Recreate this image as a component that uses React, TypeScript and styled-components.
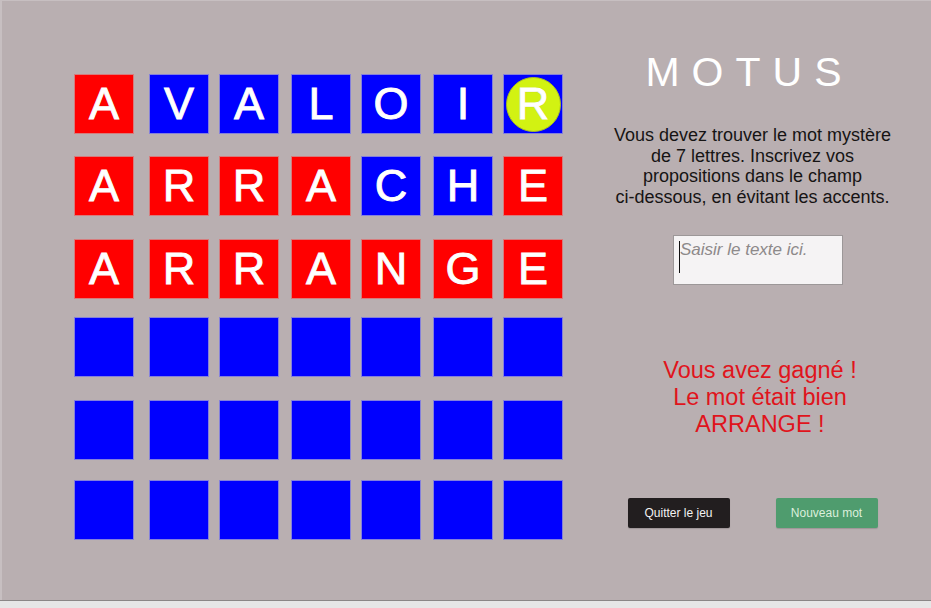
import React from "react";
import styled, { createGlobalStyle } from "styled-components";

const Global = createGlobalStyle`
  html, body { margin: 0; padding: 0; }
  body {
    width: 931px;
    height: 608px;
    overflow: hidden;
    background: #e6e6e6;
    font-family: "Liberation Sans", Arial, sans-serif;
  }
`;

const Screen = styled.div`
  width: 931px;
  height: 608px;
  display: flex;
  flex-direction: column;
`;

const Stage = styled.main`
  height: 600px;
  background: #b9afb1;
  display: flex;
  flex-direction: row;
  box-shadow: inset 2px 1px 0 0 #c7bfc1;
  border-bottom: 1px solid #8a8686;
`;

const Footer = styled.div`
  flex: 1;
  background: #e6e6e6;
`;

const Board = styled.div`
  padding: 75px 0 0 75px;
  display: grid;
  grid-template-columns: 75px 70px 72px 70px 72px 70px 59px;
  grid-template-rows: 82px 83px 78px 83px 80px 58px;
  align-content: start;
  width: 525px;
  flex-shrink: 0;
`;

type TileColor = "red" | "blue";

const Tile = styled.div<{ $color: TileColor }>`
  width: 58px;
  height: 58px;
  background: ${(p) => (p.$color === "red" ? "#ff0000" : "#0000ff")};
  box-shadow: 0 0 0 1px ${(p) => (p.$color === "red" ? "rgba(240,80,80,0.55)" : "rgba(90,90,255,0.55)")};
  display: flex;
  align-items: center;
  justify-content: center;
  color: #ffffff;
  font-family: "Liberation Sans", Arial, sans-serif;
  font-size: 45px;
  line-height: 46px;
  -webkit-text-stroke: 0.9px #ffffff;
  text-shadow: 0 0 1px rgba(60, 60, 60, 0.6);
`;

const Marker = styled.div`
  width: 55px;
  height: 55px;
  border-radius: 50%;
  background: #d2f212;
  border: 1px solid #a9bd22;
  box-sizing: border-box;
  display: flex;
  align-items: center;
  justify-content: center;
  text-shadow: 0 0 1px rgba(90, 90, 60, 0.9);
`;

const Panel = styled.section`
  width: 305px;
  display: flex;
  flex-direction: column;
  align-items: center;
`;

const Title = styled.h1`
  margin: 48px 6px 0 0;
  font-family: "Liberation Sans", Arial, sans-serif;
  font-weight: normal;
  font-size: 41px;
  line-height: 48px;
  letter-spacing: 12px;
  color: #ffffff;
`;

const Instructions = styled.p`
  margin: 29px 0 0 0;
  font-size: 18px;
  line-height: 20.5px;
  color: #161414;
  text-align: center;
  white-space: nowrap;
`;

const InputBox = styled.div`
  position: relative;
  margin: 28px 0 0 11px;
  width: 170px;
  height: 50px;
  box-sizing: border-box;
  background: #f5f3f4;
  border: 1px solid #9c9798;
  padding: 4px 0 0 6px;
`;

const Placeholder = styled.span`
  font-style: italic;
  font-size: 17px;
  line-height: 20px;
  color: #8d898a;
`;

const Caret = styled.span`
  position: absolute;
  left: 5px;
  top: 5px;
  width: 1px;
  height: 32px;
  background: #111;
`;

const Message = styled.p`
  margin: 72px 0 0 15px;
  font-size: 23.5px;
  line-height: 27px;
  color: #e0141c;
  text-align: center;
  white-space: nowrap;
`;

const Buttons = styled.div`
  margin-top: 60px;
  display: flex;
  gap: 46px;
`;

const Button = styled.button<{ $variant: "dark" | "green" }>`
  width: 102px;
  height: 30px;
  border: none;
  border-radius: 2px;
  padding: 0;
  font-family: "Liberation Sans", Arial, sans-serif;
  font-size: 12px;
  background: ${(p) => (p.$variant === "dark" ? "#221e1f" : "#4f9c6e")};
  color: ${(p) => (p.$variant === "dark" ? "#f2f2f2" : "#dcefdc")};
  box-shadow: 0 1px 1px rgba(0, 0, 0, 0.15);
`;

type Cell = { l?: string; c: TileColor; marked?: boolean };

const word = (s: string, colors: string): Cell[] =>
  s.split("").map((l, i) => ({ l, c: colors[i] === "r" ? "red" : "blue" }));

const empty = (): Cell[] => Array.from({ length: 7 }, () => ({ c: "blue" as TileColor }));

const rows: Cell[][] = [
  (() => {
    const r = word("AVALOIR", "rbbbbbb");
    r[6].marked = true;
    return r;
  })(),
  word("ARRACHE", "rrrrbbr"),
  word("ARRANGE", "rrrrrrr"),
  empty(),
  empty(),
  empty(),
];

export default function App() {
  return (
    <Screen>
      <Global />
      <Stage>
        <Board>
          {rows.flatMap((row, ri) =>
            row.map((cell, ci) => (
              <Tile key={`${ri}-${ci}`} $color={cell.c}>
                {cell.marked ? <Marker>{cell.l}</Marker> : cell.l}
              </Tile>
            ))
          )}
        </Board>
        <Panel>
          <Title>MOTUS</Title>
          <Instructions>
            Vous devez trouver le mot mystère
            <br />
            de 7 lettres. Inscrivez vos
            <br />
            propositions dans le champ
            <br />
            ci-dessous, en évitant les accents.
          </Instructions>
          <InputBox>
            <Caret />
            <Placeholder>Saisir le texte ici.</Placeholder>
          </InputBox>
          <Message>
            Vous avez gagné !
            <br />
            Le mot était bien
            <br />
            ARRANGE !
          </Message>
          <Buttons>
            <Button $variant="dark">Quitter le jeu</Button>
            <Button $variant="green">Nouveau mot</Button>
          </Buttons>
        </Panel>
      </Stage>
      <Footer />
    </Screen>
  );
}
